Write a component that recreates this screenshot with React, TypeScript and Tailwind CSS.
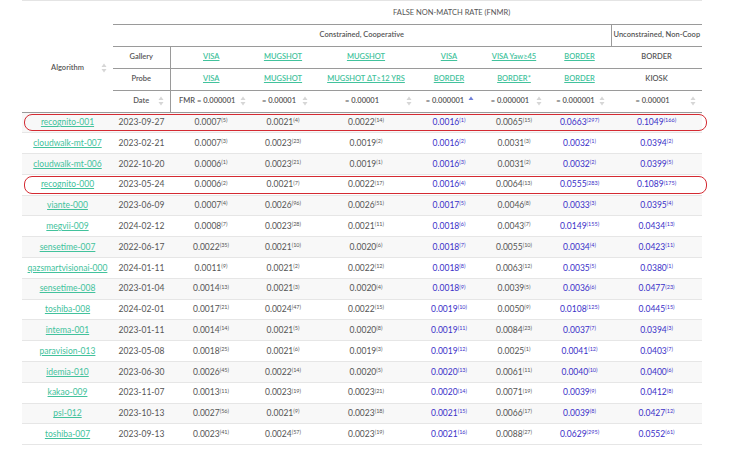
import { FC } from 'react';

type Cell = [string, string];
type Row = { name: string; date: string; vals: Cell[]; hl?: boolean };

const ROWS: Row[] = [
  { name: 'recognito-001', date: '2023-09-27', hl: true, vals: [['0.0007', '5'], ['0.0021', '4'], ['0.0022', '14'], ['0.0016', '1'], ['0.0065', '15'], ['0.0663', '297'], ['0.1049', '166']] },
  { name: 'cloudwalk-mt-007', date: '2023-02-21', vals: [['0.0007', '3'], ['0.0023', '23'], ['0.0019', '2'], ['0.0016', '2'], ['0.0031', '3'], ['0.0032', '1'], ['0.0394', '2']] },
  { name: 'cloudwalk-mt-006', date: '2022-10-20', vals: [['0.0006', '1'], ['0.0023', '21'], ['0.0019', '1'], ['0.0016', '3'], ['0.0031', '2'], ['0.0032', '2'], ['0.0399', '5']] },
  { name: 'recognito-000', date: '2023-05-24', hl: true, vals: [['0.0006', '2'], ['0.0021', '7'], ['0.0022', '17'], ['0.0016', '4'], ['0.0064', '13'], ['0.0555', '283'], ['0.1089', '175']] },
  { name: 'viante-000', date: '2023-06-09', vals: [['0.0007', '4'], ['0.0026', '96'], ['0.0026', '51'], ['0.0017', '5'], ['0.0046', '8'], ['0.0033', '3'], ['0.0395', '4']] },
  { name: 'megvii-009', date: '2024-02-12', vals: [['0.0008', '7'], ['0.0023', '28'], ['0.0021', '11'], ['0.0018', '6'], ['0.0043', '7'], ['0.0149', '155'], ['0.0434', '13']] },
  { name: 'sensetime-007', date: '2022-06-17', vals: [['0.0022', '35'], ['0.0021', '10'], ['0.0020', '6'], ['0.0018', '7'], ['0.0055', '10'], ['0.0034', '4'], ['0.0423', '11']] },
  { name: 'qazsmartvisionai-000', date: '2024-01-11', vals: [['0.0011', '9'], ['0.0021', '2'], ['0.0022', '12'], ['0.0018', '8'], ['0.0063', '12'], ['0.0035', '5'], ['0.0380', '1']] },
  { name: 'sensetime-008', date: '2023-01-04', vals: [['0.0014', '13'], ['0.0021', '3'], ['0.0020', '4'], ['0.0018', '9'], ['0.0039', '5'], ['0.0036', '6'], ['0.0477', '23']] },
  { name: 'toshiba-008', date: '2024-02-01', vals: [['0.0017', '21'], ['0.0024', '47'], ['0.0022', '15'], ['0.0019', '10'], ['0.0050', '9'], ['0.0108', '125'], ['0.0445', '15']] },
  { name: 'intema-001', date: '2023-01-11', vals: [['0.0014', '14'], ['0.0021', '5'], ['0.0020', '8'], ['0.0019', '11'], ['0.0084', '23'], ['0.0037', '7'], ['0.0394', '3']] },
  { name: 'paravision-013', date: '2023-05-08', vals: [['0.0018', '25'], ['0.0021', '6'], ['0.0019', '3'], ['0.0019', '12'], ['0.0025', '1'], ['0.0041', '12'], ['0.0403', '7']] },
  { name: 'idemia-010', date: '2023-06-30', vals: [['0.0026', '45'], ['0.0022', '14'], ['0.0020', '5'], ['0.0020', '13'], ['0.0061', '11'], ['0.0040', '10'], ['0.0400', '6']] },
  { name: 'kakao-009', date: '2023-11-07', vals: [['0.0013', '11'], ['0.0023', '19'], ['0.0023', '21'], ['0.0020', '14'], ['0.0071', '19'], ['0.0039', '9'], ['0.0412', '8']] },
  { name: 'psl-012', date: '2023-10-13', vals: [['0.0027', '56'], ['0.0021', '9'], ['0.0023', '18'], ['0.0021', '15'], ['0.0066', '17'], ['0.0039', '8'], ['0.0427', '12']] },
  { name: 'toshiba-007', date: '2023-09-13', vals: [['0.0023', '41'], ['0.0024', '57'], ['0.0023', '19'], ['0.0021', '16'], ['0.0088', '27'], ['0.0629', '295'], ['0.0552', '61']] },
];

const BLUE = [false, false, false, true, false, true, true];

const Sort: FC<{ up?: boolean }> = ({ up }) => (
  <svg width="6" height="10" viewBox="0 0 6 10" className="absolute right-[6px] top-1/2 -translate-y-1/2">
    <path d="M3 0.5 L5.5 4 H0.5 Z" fill={up ? '#6f7fd8' : '#d6d6d6'} />
    {!up && <path d="M3 9.5 L5.5 6 H0.5 Z" fill="#d6d6d6" />}
  </svg>
);

const Lnk: FC<{ t: string }> = ({ t }) => <span className="text-[#42c29c] underline">{t}</span>;

const hd = 'h-[22px] text-[7.5px] font-semibold text-[#555] text-center border-b-[1.5px] border-[#9a9a9a] p-0';

const App: FC = () => (
  <div className="w-[746px] h-[449px] bg-white overflow-hidden pl-[22px]" style={{ fontFamily: 'Lato, "Noto Sans", sans-serif' }}>
    <div className="h-px bg-[#e4e4e4] w-[680px]" />
    <table className="w-[680px] border-collapse table-fixed">
      <colgroup>
        {[91, 57, 82, 62, 104, 62, 68, 63, 91].map((w, i) => (
          <col key={i} style={{ width: w }} />
        ))}
      </colgroup>
      <thead>
        <tr>
          <th className="p-0" />
          <th colSpan={8} className="h-[23px] text-[7.5px] font-normal text-[#555] text-left pl-[280px] border-b-[1.5px] border-[#9a9a9a]">
            FALSE NON-MATCH RATE (FNMR)
          </th>
        </tr>
        <tr>
          <th rowSpan={4} className={`${hd} relative`}>
            Algorithm
            <Sort />
          </th>
          <th colSpan={7} className={`${hd} border-r-[1.5px]`}>Constrained, Cooperative</th>
          <th className={hd}>Unconstrained, Non-Coop</th>
        </tr>
        <tr>
          <th className={`${hd} border-r-[1.5px]`}>Gallery</th>
          <th className={hd}><Lnk t="VISA" /></th>
          <th className={hd}><Lnk t="MUGSHOT" /></th>
          <th className={hd}><Lnk t="MUGSHOT" /></th>
          <th className={hd}><Lnk t="VISA" /></th>
          <th className={hd}><Lnk t="VISA Yaw≥45" /></th>
          <th className={hd}><Lnk t="BORDER" /></th>
          <th className={hd}>BORDER</th>
        </tr>
        <tr>
          <th className={`${hd} border-r-[1.5px]`}>Probe</th>
          <th className={hd}><Lnk t="VISA" /></th>
          <th className={hd}><Lnk t="MUGSHOT" /></th>
          <th className={hd}><Lnk t="MUGSHOT ΔT≥12 YRS" /></th>
          <th className={hd}><Lnk t="BORDER" /></th>
          <th className={hd}><Lnk t="BORDER*" /></th>
          <th className={hd}><Lnk t="BORDER" /></th>
          <th className={hd}>KIOSK</th>
        </tr>
        <tr>
          <th className={`${hd} border-r-[1.5px] relative`}>Date<Sort /></th>
          {['FMR = 0.000001', '= 0.00001', '= 0.00001', '= 0.000001', '= 0.000001', '= 0.000001', '= 0.00001'].map((t, i) => (
            <th key={i} className={`${hd} relative pr-[8px]`}>
              {t}
              <Sort up={i === 3} />
            </th>
          ))}
        </tr>
      </thead>
      <tbody>
        {ROWS.map((r, ri) => (
          <tr key={r.name} className={ri % 2 === 0 ? 'bg-[#f8f8f8]' : 'bg-white'}>
            <td className="relative h-[20.8px] p-0 text-center text-[8.5px] border-b border-[#e6e6e6]">
              <Lnk t={r.name} />
              {r.hl && (
                <div className="absolute left-[2px] top-[1px] bottom-[1px] w-[683px] rounded-[8px] border-[1.5px] border-[#d42a32] pointer-events-none z-10" />
              )}
            </td>
            <td className="p-0 text-center text-[8.5px] text-[#555] border-b border-[#e6e6e6]">{r.date}</td>
            {r.vals.map(([v, s], i) => (
              <td key={i} className={`p-0 text-center text-[8.5px] border-b border-[#e6e6e6] ${BLUE[i] ? 'text-[#3a30c8]' : 'text-[#555]'}`}>
                {v}
                <sup className="text-[5.5px]">({s})</sup>
              </td>
            ))}
          </tr>
        ))}
      </tbody>
    </table>
  </div>
);

export default App;
